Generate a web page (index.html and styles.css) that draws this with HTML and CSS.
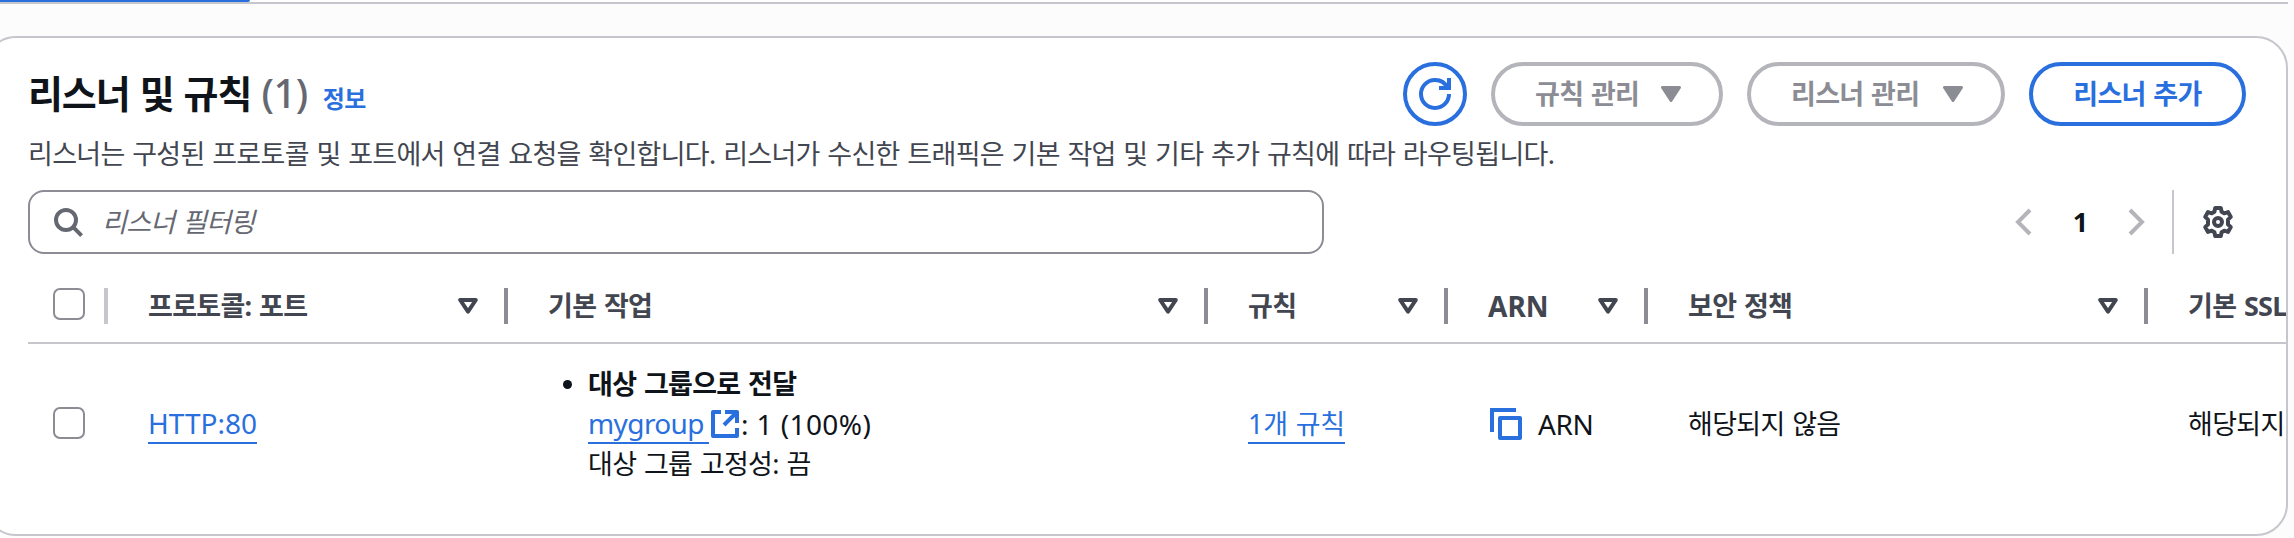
FILE: index.html
```html
<!DOCTYPE html>
<html lang="ko">
<head>
<meta charset="utf-8">
<title>리스너 및 규칙</title>
<link rel="stylesheet" href="styles.css">
</head>
<body>
<svg class="defs" width="0" height="0" aria-hidden="true">
  <symbol id="caret" viewBox="0 0 20 16"><path d="M1.500 1.500h17L10 14.500z" fill="currentColor" stroke="currentColor" stroke-width="3" stroke-linejoin="round"/></symbol>
  <symbol id="sort" viewBox="0 0 20 16"><path d="M2.2 2h15.600L10 13.600z" fill="none" stroke="currentColor" stroke-width="4" stroke-linejoin="round"/></symbol>
</svg>
<div class="tabs"><div class="tab-active"></div></div>
<section class="panel">
  <header class="head">
    <div class="title">
      <h2>리스너 및 규칙 <span class="count">(1)</span></h2>
      <a class="info">정보</a>
    </div>
    <div class="actions">
      <button class="btn round"><svg width="32" height="32" viewBox="0 0 16 16" fill="none" stroke="currentColor" stroke-width="2"><path d="M10 5h5V0"/><path d="M15 8a6.957 6.957 0 0 1-7 7 6.957 6.957 0 0 1-7-7 6.957 6.957 0 0 1 7-7 6.870 6.870 0 0 1 6.300 4"/></svg></button>
      <button class="btn off b1"><span>규칙 관리</span><svg width="20" height="16"><use href="#caret"/></svg></button>
      <button class="btn off b2"><span>리스너 관리</span><svg width="20" height="16"><use href="#caret"/></svg></button>
      <button class="btn b3"><span>리스너 추가</span></button>
    </div>
  </header>
  <p class="desc">리스너는 구성된 프로토콜 및 포트에서 연결 요청을 확인합니다. 리스너가 수신한 트래픽은 기본 작업 및 기타 추가 규칙에 따라 라우팅됩니다.</p>
  <div class="tools">
    <div class="search">
      <svg width="32" height="32" viewBox="0 0 16 16" fill="none" stroke="currentColor" stroke-width="2"><circle cx="7" cy="7" r="5"/><path d="m10.600 10.600 4.200 4.200"/></svg>
      <span>리스너 필터링</span>
    </div>
    <div class="pager">
      <svg class="chev" width="32" height="32" viewBox="0 0 16 16"><path d="M11 2 5 8l6 6"/></svg>
      <b>1</b>
      <svg class="chev" width="32" height="32" viewBox="0 0 16 16"><path d="m5 2 6 6-6 6"/></svg>
      <i class="rule"></i>
      <svg class="gear" width="32" height="32" viewBox="0 0 16 16" fill="none" stroke="currentColor" stroke-width="2" stroke-linejoin="round"><path d="M6.600 1h2.800l.4 1.900 1.300.75 1.900-.6 1.400 2.400L13 6.800v2.400l1.400 1.350-1.400 2.400-1.900-.6-1.300.75L9.400 15H6.600l-.4-1.900-1.300-.75-1.900.6-1.400-2.400L3 9.200V6.800L1.600 5.450 3 3.050l1.900.6 1.300-.75z"/><circle cx="8" cy="8" r="2"/></svg>
    </div>
  </div>
  <div class="grid th">
    <div class="cell sel"><i class="box"></i></div>
    <div class="cell"><span>프로토콜: 포트</span><svg width="20" height="16"><use href="#sort"/></svg></div>
    <div class="cell"><span>기본 작업</span><svg width="20" height="16"><use href="#sort"/></svg></div>
    <div class="cell"><span>규칙</span><svg width="20" height="16"><use href="#sort"/></svg></div>
    <div class="cell"><span class="lat">ARN</span><svg width="20" height="16"><use href="#sort"/></svg></div>
    <div class="cell"><span>보안 정책</span><svg width="20" height="16"><use href="#sort"/></svg></div>
    <div class="cell"><span>기본 SSL</span></div>
  </div>
  <div class="grid tr">
    <div class="cell sel"><i class="box"></i></div>
    <div class="cell"><a class="link lat">HTTP:80</a></div>
    <div class="cell">
      <ul class="acts"><li>
        <div class="bold">대상 그룹으로 전달</div>
        <div class="target"><a class="link lat grp">mygroup</a><svg class="ext" width="32" height="32" viewBox="0 0 16 16" fill="none" stroke="currentColor" stroke-width="2" stroke-linejoin="round"><path d="M6 2H2v12h12V10M8 2h6v5.500M14 2 7.500 8.500"/></svg><span class="lat weight">: 1 (100%)</span></div>
        <div class="sticky">대상 그룹 고정성: 끔</div>
      </li></ul>
    </div>
    <div class="cell"><a class="link rules">1개 규칙</a></div>
    <div class="cell"><svg class="copy" width="34" height="32" viewBox="0 0 34 32" fill="none" stroke="currentColor" stroke-width="4"><path d="M4 24V2h24"/><rect x="12" y="10" width="20" height="20" stroke-linejoin="round"/></svg><span class="lat arn">ARN</span></div>
    <div class="cell"><span>해당되지 않음</span></div>
    <div class="cell"><span>해당되지</span></div>
  </div>
</section>
</body>
</html>
```
FILE: styles.css
```css
* { box-sizing: border-box; margin: 0; padding: 0; }
body {
  width: 2294px;
  height: 538px;
  overflow: hidden;
  background: #fcfcfd;
  color: #0f141a;
  font: 27px/40px "Noto Sans", "Noto Sans CJK KR", sans-serif;
  letter-spacing: -0.7px;
  word-spacing: 1.3px;
}
svg { display: block; flex: none; }
.defs { position: absolute; }
.lat { font-size: 28px; letter-spacing: 0; word-spacing: 0; }
.tabs { width: 2288px; height: 4px; background: #fff; border-bottom: 2px solid #c6c6cd; }
.tab-active { width: 250px; height: 2px; background: #296fde; border-radius: 0 0 2px 0; }
.panel {
  width: 2304px;
  height: 500px;
  margin: 32px 0 0 -16px;
  padding-top: 24px;
  background: #fff;
  border: 2px solid #c6c6cd;
  border-radius: 32px;
  overflow: hidden;
}
.head { display: flex; justify-content: space-between; padding: 0 40px 0 42px; height: 64px; }
.title { display: flex; align-items: baseline; gap: 15px; }
h2 { font-size: 38px; line-height: 62px; letter-spacing: -1.1px; }
.count { color: #656871; font-weight: 500; font-size: 40px; letter-spacing: -0.5px; }
.info { color: #296fde; font-size: 24px; font-weight: 700; }
.actions { display: flex; gap: 24px; }
.btn {
  display: flex;
  align-items: center;
  height: 64px;
  border: 4px solid #296fde;
  border-radius: 32px;
  background: #fff;
  color: #296fde;
  font: inherit;
  font-weight: 700;
  letter-spacing: -0.7px;
  word-spacing: 1.3px;
  padding: 0 38px 0 40px;
  justify-content: space-between;
  white-space: nowrap;
}
.off { color: #8c8c94; border-color: #b4b4bb; }
.round { width: 64px; padding: 0; justify-content: center; }
.b1 { width: 232px; }
.b2 { width: 258px; }
.b3 { width: 217px; padding: 0; justify-content: center; }
.desc { padding-left: 42px; margin-top: 8px; color: #424650; white-space: nowrap; }
.tools { display: flex; justify-content: space-between; margin: 16px 52px 0 42px; height: 64px; }
.search {
  display: flex;
  align-items: center;
  gap: 18px;
  width: 1296px;
  padding-left: 22px;
  border: 2px solid #8c8c94;
  border-radius: 16px;
  color: #656871;
}
.search span { font-style: italic; }
.pager { display: flex; align-items: center; color: #424650; }
.pager b { width: 80px; text-align: center; color: #0f141a; }
.chev { fill: none; stroke: #b4b4bb; stroke-width: 2; }
.rule { width: 2px; height: 64px; margin: 0 28px 0 20px; background: #c6c6cd; }
.grid { display: grid; grid-template-columns: 80px 400px 700px 240px 200px 500px 500px; margin-left: 42px; }
.cell { display: flex; align-items: center; padding-left: 40px; white-space: nowrap; }
.cell.sel { padding: 0 0 0 25px; }
.box { flex: none; width: 32px; height: 32px; border: 2px solid #8c8c94; border-radius: 7px; }
.th { height: 90px; padding-top: 34px; border-bottom: 2px solid #c6c6cd; color: #424650; font-weight: 700; align-items: start; }
.th .cell { height: 36px; justify-content: space-between; padding-right: 26px; border-right: 4px solid #8c8c94; }
.th .cell.sel { padding-right: 0; border-color: #c6c6cd; align-items: flex-start; }
.tr { padding-top: 20px; }
.tr > .cell { height: 120px; }
.tr .box { margin-top: -2px; }
.link { color: #296fde; line-height: 37px; border-bottom: 2px solid #296fde; }
.rules { letter-spacing: -0.3px; }
.acts { list-style: none; }
.acts li { padding-left: 40px; }
.acts li::before { content: ""; float: left; width: 9px; height: 9px; margin: 16px 0 0 -25px; border-radius: 50%; background: #0f141a; }
.bold { font-weight: 700; }
.target { display: flex; align-items: center; }
.grp { width: 121px; letter-spacing: -0.6px; }
.weight { letter-spacing: 0.4px; }
.arn { letter-spacing: -0.4px; }
.ext, .copy { color: #296fde; }
.copy { margin-right: 16px; }
```
